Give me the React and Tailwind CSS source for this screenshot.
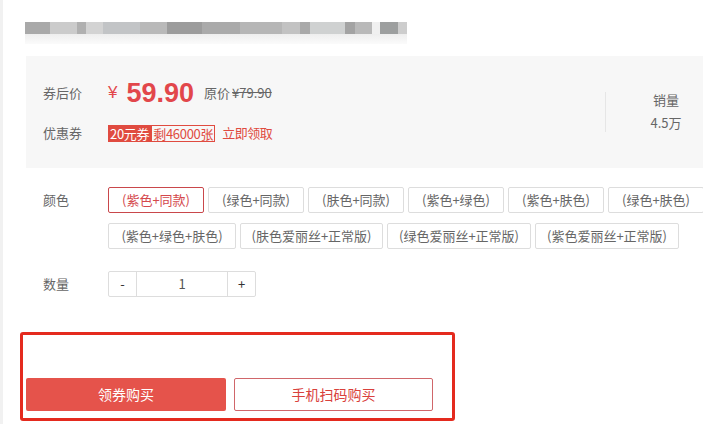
import React from "react";

const blur = [
  ["w-[25px]", "bg-[#a9a9a9]"],
  ["w-[27px]", "bg-[#cbcbcb]"],
  ["w-[9px]", "bg-[#b0b0b0]"],
  ["w-[17px]", "bg-[#d3d3d3]"],
  ["w-[37px]", "bg-[#c2c4c6]"],
  ["w-[27px]", "bg-[#b9b9b9]"],
  ["w-[35px]", "bg-[#9c9c9c]"],
  ["w-[38px]", "bg-[#aaaaaa]"],
  ["w-[42px]", "bg-[#b6b6b6]"],
  ["w-[18px]", "bg-[#c2c2c2]"],
  ["w-[10px]", "bg-[#a9a9a9]"],
  ["w-[35px]", "bg-[#cfd1d1]"],
  ["w-[10px]", "bg-[#a3a3a3]"],
  ["w-[17px]", "bg-[#b9b9b9]"],
  ["w-[8px]", "bg-[#f0f0f0]"],
  ["w-[18px]", "bg-[#9d9f9f]"],
  ["w-[9px]", "bg-[#cdcdcd]"],
];

const options = [
  ["(紫色+同款)", "w-[96px]", true],
  ["(绿色+同款)", "w-[96px]", false],
  ["(肤色+同款)", "w-[96px]", false],
  ["(紫色+绿色)", "w-[96px]", false],
  ["(紫色+肤色)", "w-[96px]", false],
  ["(绿色+肤色)", "w-[96px]", false],
  ["(紫色+绿色+肤色)", "w-[128px]", false],
  ["(肤色爱丽丝+正常版)", "w-[143px]", false],
  ["(绿色爱丽丝+正常版)", "w-[144px]", false],
  ["(紫色爱丽丝+正常版)", "w-[144px]", false],
];

export default function App() {
  return (
    <div
      className="w-[703px] h-[424px] overflow-hidden bg-white flex"
      style={{ fontFamily: '"Noto Sans CJK SC", "Liberation Sans", sans-serif' }}
    >
      <div className="w-[3px] shrink-0 bg-[#f1f1f1]" />
      <div className="flex-1 pl-[22px] pt-[22px] flex flex-col">
        {/* blurred title */}
        <div className="flex flex-col w-[382px]">
          <div className="flex h-[12px]">
            {blur.map(([w, c], i) => (
              <div key={i} className={`${w} ${c} h-full`} />
            ))}
          </div>
          <div className="h-[10px] bg-gradient-to-b from-[#eeeeee] to-[#fbfbfb]" />
        </div>

        {/* price panel */}
        <div className="mt-[12px] ml-[1px] w-[700px] h-[112px] bg-[#f7f7f7] flex shrink-0">
          <div className="w-[579px] pl-[17px] pt-[22px] flex flex-col">
            <div className="flex items-center h-[30px]">
              <div className="w-[65px] text-[13px] text-[#666]">券后价</div>
              <span className="text-[17px] text-[#e2474b] mr-[9px]" style={{ fontFamily: '"Liberation Sans", sans-serif' }}>¥</span>
              <span
                className="text-[27px] font-bold text-[#e2474b] leading-none"
                style={{ fontFamily: '"Liberation Sans", sans-serif' }}
              >
                59.90
              </span>
              <span className="ml-[10px] text-[13px] text-[#666]">原价</span>
              <span className="ml-[2px] text-[13px] text-[#666] line-through">¥79.90</span>
            </div>
            <div className="flex items-center h-[18px] mt-[16px]">
              <div className="w-[65px] text-[13px] text-[#666]">优惠券</div>
              <span className="h-[17px] px-[2px] bg-[#e04b40] text-white text-[13px] leading-[17px] tracking-[-0.3px]">20元券</span>
              <span className="h-[17px] px-[1px] border border-[#e04b40] text-[#e04b40] text-[13px] leading-[15px] tracking-[-0.3px]">剩46000张</span>
              <span className="ml-[7px] text-[13px] text-[#e04b40] tracking-[-0.5px]">立即领取</span>
            </div>
          </div>
          <div className="w-px h-[40px] mt-[36px] bg-[#e6e6e6]" />
          <div className="w-[120px] flex flex-col items-center pt-[32px] text-[13px] text-[#666] leading-[23px]">
            <span>销量</span>
            <span>4.5万</span>
          </div>
        </div>

        {/* colors */}
        <div className="flex mt-[19px] pl-[18px]">
          <div className="w-[65px] text-[13px] text-[#666] leading-[26px]">颜色</div>
          <div className="w-[600px] flex flex-wrap gap-x-[4px] gap-y-[10px]">
            {options.map(([t, w, sel], i) => (
              <div
                key={i}
                className={`${w} h-[26px] rounded-[2px] border flex items-center justify-center text-[13px] ${
                  sel ? "border-[#c9474b] text-[#d4484c]" : "border-[#dddddd] text-[#666]"
                }`}
              >
                {t}
              </div>
            ))}
          </div>
        </div>

        {/* quantity */}
        <div className="flex mt-[22px] pl-[18px] items-center">
          <div className="w-[65px] text-[13px] text-[#666]">数量</div>
          <div className="flex h-[26px] border border-[#dddddd] rounded-[2px] text-[13px] text-[#333]">
            <div className="w-[28px] flex items-center justify-center border-r border-[#dddddd]">-</div>
            <div className="w-[90px] flex items-center justify-center text-[#555]">1</div>
            <div className="w-[28px] flex items-center justify-center border-l border-[#dddddd]">+</div>
          </div>
        </div>

        {/* buy box */}
        <div className="mt-[35px] -ml-[5px] w-[435px] h-[89px] border-[3px] border-[#e42a1e] rounded-[3px] pt-[43px] pl-[3px] flex gap-[8px]">
          <div className="w-[200px] h-[33px] bg-[#e5534b] rounded-[2px] text-white text-[14px] flex items-center justify-center">
            领券购买
          </div>
          <div className="w-[199px] h-[33px] border border-[#d0666a] rounded-[2px] text-[#d9413c] text-[14px] flex items-center justify-center">
            手机扫码购买
          </div>
        </div>
      </div>
    </div>
  );
}
